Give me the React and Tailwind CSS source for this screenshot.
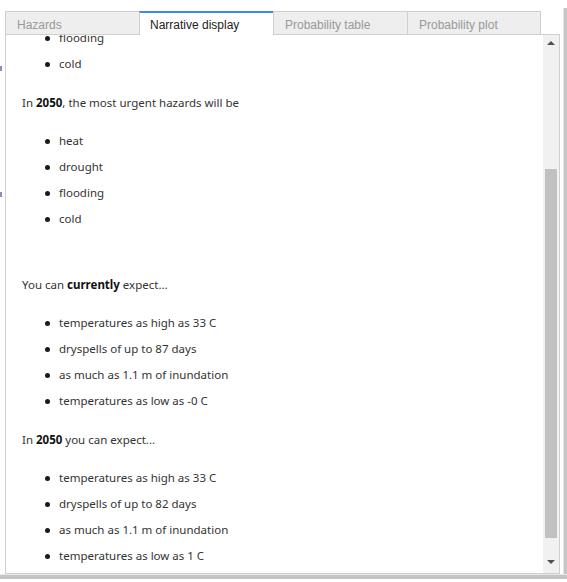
const tabs = ["Hazards", "Narrative display", "Probability table", "Probability plot"];

function Bullets({ items, className = "" }) {
  return (
    <ul className={className}>
      {items.map((t, i) => (
        <li key={i} className="h-[26px] flex items-center pl-[23px]">
          <span className="w-[5px] h-[5px] rounded-full bg-[#1a1a1a] mr-[9px] shrink-0" />
          <span>{t}</span>
        </li>
      ))}
    </ul>
  );
}

export default function App() {
  const active = 1;
  return (
    <div className="w-[567px] h-[582px] bg-white flex flex-col overflow-hidden">
      <div className="flex h-[574px]">
        {/* left gutter marks */}
        <div className="w-[5px] flex flex-col">
          <div className="w-[2px] h-[5px] bg-[#8a8ac8] mt-[66px]" />
          <div className="w-[2px] h-[5px] bg-[#8a8ac8] mt-[121px]" />
        </div>

        <div className="w-[555px] flex flex-col pt-[11px]">
          {/* tabs */}
          <div className="flex h-[24px] font-['Liberation_Sans',Arial,sans-serif] text-[12px]">
            {tabs.map((t, i) => (
              <div
                key={t}
                className={
                  i === active
                    ? "w-[134px] h-[24px] bg-white border-t-2 border-t-[#3d8fdc] border-l border-l-[#cfcfcf] pl-[10px] pt-[3px] text-[#222]"
                    : `w-[134px] h-[24px] bg-[#eeeeee] border-t border-l border-b border-[#cfcfcf] ${i === tabs.length - 1 ? "border-r" : ""} pl-[11px] pt-[4px] text-[#999]`
                }
              >
                {t}
              </div>
            ))}
            <div className="flex-1 border-b border-[#cfcfcf]" />
          </div>

          {/* panel */}
          <div className="h-[539px] flex border-l border-r border-b border-[#cfcfcf]">
            <div className="flex-1 overflow-hidden font-['Segoe_UI','Noto_Sans',sans-serif] text-[11.5px] text-[#333]">
              <div className="-mt-[10px] pl-[16px]">
                <Bullets items={["flooding", "cold"]} />
                <p className="mt-[17px] leading-[18px]">
                  In <b className="text-[#111]">2050</b>, the most urgent hazards will be
                </p>
                <Bullets className="mt-[16px]" items={["heat", "drought", "flooding", "cold"]} />
                <p className="mt-[44px] leading-[18px]">
                  You can <b className="text-[#111]">currently</b> expect...
                </p>
                <Bullets
                  className="mt-[16px]"
                  items={[
                    "temperatures as high as 33 C",
                    "dryspells of up to 87 days",
                    "as much as 1.1 m of inundation",
                    "temperatures as low as -0 C",
                  ]}
                />
                <p className="mt-[17px] leading-[18px]">
                  In <b className="text-[#111]">2050</b> you can expect...
                </p>
                <Bullets
                  className="mt-[16px]"
                  items={[
                    "temperatures as high as 33 C",
                    "dryspells of up to 82 days",
                    "as much as 1.1 m of inundation",
                    "temperatures as low as 1 C",
                  ]}
                />
              </div>
            </div>

            {/* inner scrollbar */}
            <div className="w-[16px] bg-[#f1f1f1] flex flex-col">
              <div className="h-[15px] flex items-center justify-center">
                <div className="w-0 h-0 border-l-[4px] border-r-[4px] border-b-[4px] border-l-transparent border-r-transparent border-b-[#505050]" />
              </div>
              <div className="flex-1 flex flex-col px-[2px]">
                <div className="mt-[119px] h-[369px] bg-[#c1c1c1]" />
              </div>
              <div className="h-[15px] mb-[4px] flex items-center justify-center">
                <div className="w-0 h-0 border-l-[4px] border-r-[4px] border-t-[4px] border-l-transparent border-r-transparent border-t-[#505050]" />
              </div>
            </div>
          </div>
        </div>

        {/* outer scrollbar */}
        <div className="w-[7px] flex pt-[8px]">
          <div className="w-[3px] bg-white" />
          <div className="w-[1px] bg-[#e6e6e6]" />
          <div className="w-[3px] bg-[#c6c6c6]" />
        </div>
      </div>
      <div className="h-[1px] bg-[#e8e8e8]" />
      <div className="h-[4px] bg-[#c4c4c4]" />
    </div>
  );
}
